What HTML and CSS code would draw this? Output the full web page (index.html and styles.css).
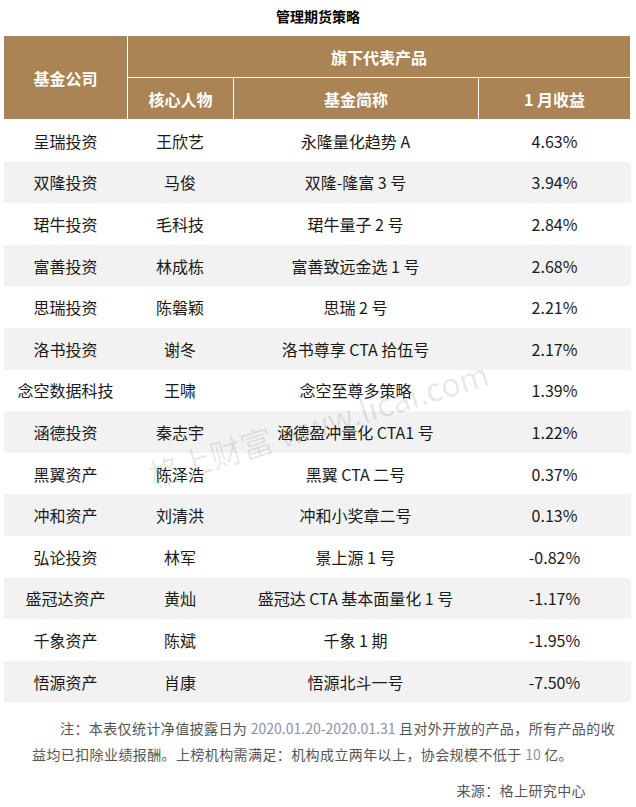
FILE: index.html
```html
<!DOCTYPE html>
<html lang="zh-CN">
<head>
<meta charset="utf-8">
<title>管理期货策略</title>
<link rel="stylesheet" href="styles.css">
</head>
<body>
<div class="page">
  <h1 class="title">管理期货策略</h1>
  <div class="table">
    <div class="thead">
      <div class="th th-company">基金公司</div>
      <div class="th th-group">旗下代表产品</div>
      <div class="th">核心人物</div>
      <div class="th">基金简称</div>
      <div class="th">1 月收益</div>
    </div>
    <div class="tbody">
      <div class="row"><span>呈瑞投资</span><span>王欣艺</span><span>永隆量化趋势 A</span><span>4.63%</span></div>
      <div class="row"><span>双隆投资</span><span>马俊</span><span>双隆-隆富 3 号</span><span>3.94%</span></div>
      <div class="row"><span>珺牛投资</span><span>毛科技</span><span>珺牛量子 2 号</span><span>2.84%</span></div>
      <div class="row"><span>富善投资</span><span>林成栋</span><span>富善致远金选 1 号</span><span>2.68%</span></div>
      <div class="row"><span>思瑞投资</span><span>陈磐颖</span><span>思瑞 2 号</span><span>2.21%</span></div>
      <div class="row"><span>洛书投资</span><span>谢冬</span><span>洛书尊享 CTA 拾伍号</span><span>2.17%</span></div>
      <div class="row"><span>念空数据科技</span><span>王啸</span><span>念空至尊多策略</span><span>1.39%</span></div>
      <div class="row"><span>涵德投资</span><span>秦志宇</span><span>涵德盈冲量化 CTA1 号</span><span>1.22%</span></div>
      <div class="row"><span>黑翼资产</span><span>陈泽浩</span><span>黑翼 CTA 二号</span><span>0.37%</span></div>
      <div class="row"><span>冲和资产</span><span>刘清洪</span><span>冲和小奖章二号</span><span>0.13%</span></div>
      <div class="row"><span>弘论投资</span><span>林军</span><span>景上源 1 号</span><span>-0.82%</span></div>
      <div class="row"><span>盛冠达资产</span><span>黄灿</span><span>盛冠达 CTA 基本面量化 1 号</span><span>-1.17%</span></div>
      <div class="row"><span>千象资产</span><span>陈斌</span><span>千象 1 期</span><span>-1.95%</span></div>
      <div class="row"><span>悟源资产</span><span>肖康</span><span>悟源北斗一号</span><span>-7.50%</span></div>
    </div>
  </div>
  <p class="note">注：本表仅统计净值披露日为 <span class="num">2020.01.20-2020.01.31</span> 且对外开放的产品，所有产品的收益均已扣除业绩报酬。上榜机构需满足：机构成立两年以上，协会规模不低于 <span class="num">10</span> 亿。</p>
  <p class="source">来源：格上研究中心</p>
  <div class="watermark">格上财富 www.licai.com</div>
</div>
</body>
</html>
```
FILE: styles.css
```css
* { box-sizing: border-box; }
html, body { margin: 0; padding: 0; background: #fff; }
body {
  font-family: "Noto Sans CJK SC", "Noto Sans", sans-serif;
  color: #1a1a1a;
}
.page {
  position: relative;
  width: 636px;
  height: 807px;
  overflow: hidden;
}
.title {
  margin: 0;
  height: 36px;
  padding-top: 6px;
  font-size: 14px;
  line-height: 20px;
  font-weight: 700;
  text-align: center;
  color: #000;
}
.table {
  margin-left: 4px;
  width: 627px;
}
.thead {
  display: grid;
  grid-template-columns: 123px 105px 244px 1fr;
  grid-template-rows: 41px 41px;
  gap: 1px;
  background: #fff;
  width: 626px;
}
.th {
  background: #ab8455;
  color: #fff;
  font-weight: 700;
  font-size: 16px;
  display: flex;
  align-items: center;
  justify-content: center;
}
.th-company { grid-row: 1 / 3; }
.th-group { grid-column: 2 / 5; }
.tbody { margin-top: 1px; }
.row {
  display: grid;
  grid-template-columns: 123px 106px 245px 1fr;
  height: 41.6px;
  align-items: center;
  font-size: 16px;
}
.row:nth-child(even) { background: #f2f2f2; }
.row span { text-align: center; white-space: nowrap; }
.note {
  margin: 13px 0 0;
  padding: 0 8px 0 32px;
  font-size: 14px;
  line-height: 26px;
  letter-spacing: 0.4px;
  text-indent: 28px;
  color: #555;
}
.num { color: #8a92a6; letter-spacing: 0; }
.source {
  margin: 10px 0 0;
  padding-right: 50px;
  text-align: right;
  font-size: 14px;
  line-height: 26px;
  letter-spacing: 0.4px;
  color: #555;
}
.watermark {
  position: absolute;
  left: 318px;
  top: 423px;
  transform: translate(-50%, -50%) rotate(-17deg);
  font-size: 32px;
  white-space: nowrap;
  color: rgba(0, 0, 0, 0.09);
  pointer-events: none;
}
```
